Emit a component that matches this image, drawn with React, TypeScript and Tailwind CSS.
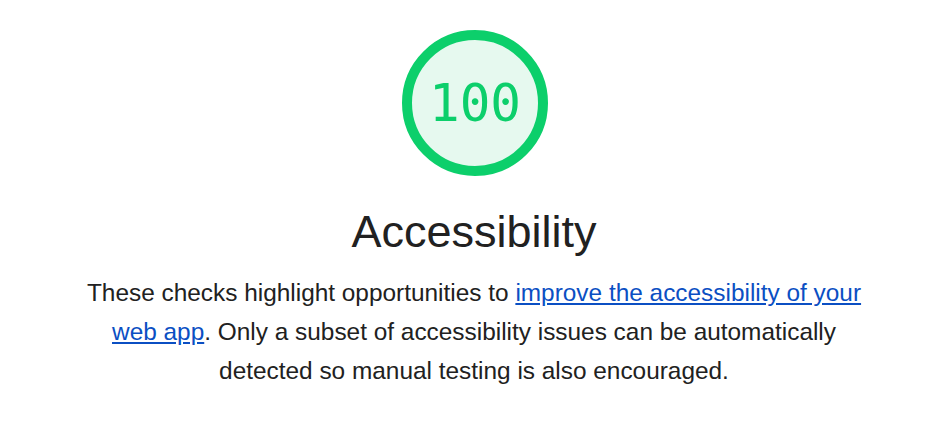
export default function App() {
  const r = 68;
  return (
    <div className="w-[948px] h-[422px] bg-white flex flex-col items-center pt-[30px]" style={{ fontFamily: '"Liberation Sans", Arial, sans-serif' }}>
      <div className="relative w-[146px] h-[146px] ml-[2px]">
        <svg width="146" height="146" viewBox="0 0 146 146" className="absolute inset-0">
          <circle cx="73" cy="73" r={r} fill="#e6f9ef" stroke="#0ccf6b" strokeWidth="10" />
        </svg>
        <div
          className="absolute inset-0 flex items-center justify-center text-[#0ccf6b] text-[51px] leading-none"
          style={{ fontFamily: '"DejaVu Sans Mono", "Liberation Mono", monospace' }}
        >
          100
        </div>
      </div>
      <h1 className="mt-[28px] text-[45px] leading-[56px] text-[#212121]">Accessibility</h1>
      <p className="mt-[13px] w-[810px] text-center text-[24.4px] leading-[39px] text-[#212121]">
        These checks highlight opportunities to{" "}
        <a href="#" className="text-[#0b4fc3] underline">
          improve the accessibility of your web app
        </a>
        . Only a subset of accessibility issues can be automatically detected so manual testing is also encouraged.
      </p>
    </div>
  );
}
